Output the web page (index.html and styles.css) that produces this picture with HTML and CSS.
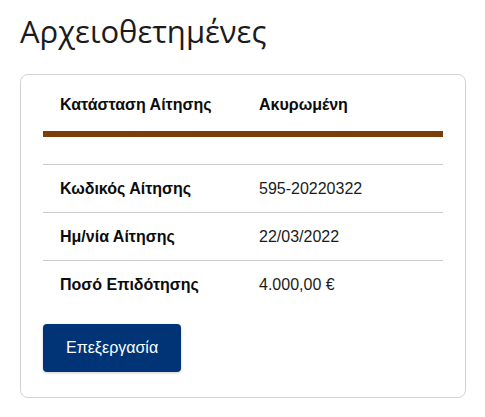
FILE: index.html
```html
<!DOCTYPE html>
<html lang="el">
<head>
<meta charset="utf-8">
<link rel="stylesheet" href="styles.css">
</head>
<body>
<h1 class="title">Αρχειοθετημένες</h1>
<div class="card">
  <div class="row row-head">
    <div class="label">Κατάσταση Αίτησης</div>
    <div class="label">Ακυρωμένη</div>
  </div>
  <div class="row-spacer"></div>
  <div class="row">
    <div class="label">Κωδικός Αίτησης</div>
    <div class="value">595-20220322</div>
  </div>
  <div class="row">
    <div class="label">Ημ/νία Αίτησης</div>
    <div class="value">22/03/2022</div>
  </div>
  <div class="row row-last">
    <div class="label">Ποσό Επιδότησης</div>
    <div class="value">4.000,00 €</div>
  </div>
  <button class="btn" type="button">Επεξεργασία</button>
</div>
</body>
</html>
```
FILE: styles.css
```css
html, body {
  margin: 0;
  padding: 0;
  background: #ffffff;
}
body {
  padding: 0 19px 0 20px;
  font-family: "Liberation Sans", Arial, sans-serif;
  color: #0b0c0c;
}
.title {
  margin: 11px 0 23px 0;
  font-family: "Open Sans", sans-serif;
  font-weight: 500;
  font-size: 31px;
  line-height: 40px;
  color: #1b1b1b;
}
.card {
  border: 1px solid #d2d2d2;
  border-radius: 8px;
  padding: 0 22px 25px 22px;
}
.row {
  display: grid;
  grid-template-columns: 199px 1fr;
  padding: 0 17px;
  height: 47px;
  align-items: center;
  border-bottom: 1px solid #cccccc;
  font-size: 16px;
}
.row-head {
  align-items: end;
  height: 39px;
  padding-top: 0;
  padding-bottom: 17px;
  border-bottom: 6px solid #7b3f0b;
}
.row-spacer {
  height: 27px;
  border-bottom: 1px solid #cccccc;
}
.row-last {
  border-bottom: none;
  height: 48px;
}
.label {
  font-weight: 700;
}
.value {
  font-weight: 400;
  color: #1b1b1b;
}
.btn {
  margin-top: 15px;
  display: block;
  background: #003476;
  color: #ffffff;
  border: none;
  border-radius: 4px;
  font-family: "Liberation Sans", Arial, sans-serif;
  font-size: 16px;
  padding: 0 23px;
  height: 48px;
  box-shadow: 0 1px 3px rgba(0, 0, 0, 0.2);
}
```
